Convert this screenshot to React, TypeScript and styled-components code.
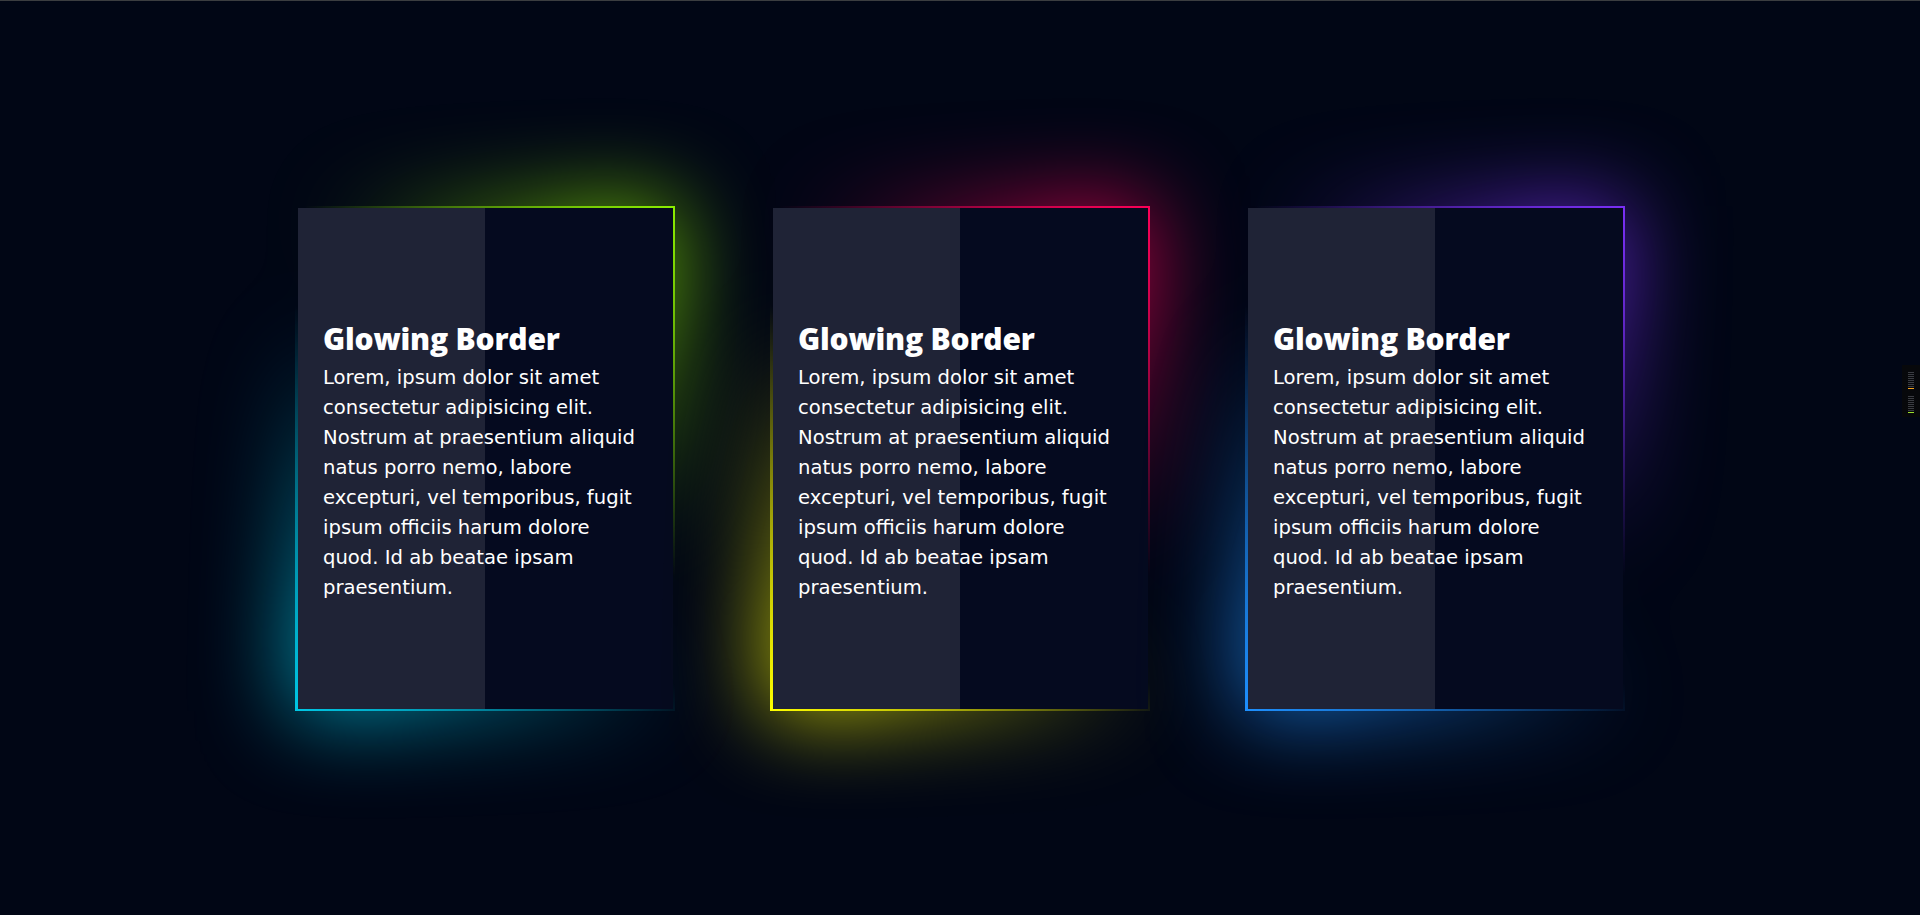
import React from "react";
import styled, { createGlobalStyle } from "styled-components";

const Global = createGlobalStyle`
  html, body {
    margin: 0;
    padding: 0;
    background: #010615;
  }
  body {
    border-top: 1px solid #3b3d40;
    font-family: "DejaVu Sans", "Open Sans", sans-serif;
    color: #ffffff;
  }
`;

const Page = styled.main`
  min-height: 914px;
  display: flex;
  align-items: center;
  justify-content: center;
  gap: 95px;
`;

const Card = styled.article<{ $from: string; $to: string }>`
  position: relative;
  isolation: isolate;
  width: 380px;
  height: 505px;
  box-sizing: border-box;
  padding: 2px 2px 2px 3px;
  display: flex;

  &::before,
  &::after {
    content: "";
    position: absolute;
    inset: 0;
    background: linear-gradient(
      45deg,
      ${(p) => p.$from} 0%,
      transparent 46%,
      transparent 58%,
      ${(p) => p.$to} 100%
    );
  }
  &::after {
    z-index: 0;
    filter: blur(46px);
  }
  &::before {
    z-index: 1;
  }
`;

const Panel = styled.div`
  position: relative;
  z-index: 2;
  flex: 1;
  display: flex;
  flex-direction: column;
  justify-content: center;
  padding: 7px 24px 0 25px;
  background: linear-gradient(90deg, #1f2336 50%, #050a1f 50%);
`;

const Title = styled.h2`
  margin: 0 0 6px;
  font-family: "Open Sans", "Noto Sans", sans-serif;
  font-weight: 800;
  font-size: 30px;
  line-height: 36px;
  letter-spacing: -0.2px;
  color: #ffffff;
`;

const Body = styled.p`
  margin: 0;
  font-family: "DejaVu Sans", "Open Sans", sans-serif;
  font-weight: 400;
  font-size: 19.6px;
  line-height: 30px;
  color: #ffffff;
`;

const MiniMap = styled.aside`
  position: fixed;
  right: 0;
  top: 365px;
  width: 18px;
  height: 52px;
  box-sizing: border-box;
  padding: 7px 6px 0 6px;
  background: #07080b;
  display: flex;
  flex-direction: column;
  gap: 1px;
`;

const MapLine = styled.span<{ $color: string; $gap?: boolean }>`
  display: block;
  height: 1px;
  background: ${(p) => p.$color};
  margin-top: ${(p) => (p.$gap ? "6px" : "0")};
`;

const cards = [
  { from: "#00c8e6", to: "#8cf000" },
  { from: "#ffff00", to: "#ff0058" },
  { from: "#1e90ff", to: "#7b2ff7" },
];

const text =
  "Lorem, ipsum dolor sit amet consectetur adipisicing elit. Nostrum at praesentium aliquid natus porro nemo, labore excepturi, vel temporibus, fugit ipsum officiis harum dolore quod. Id ab beatae ipsam praesentium.";

export default function App() {
  const group = (accent: string, first: boolean) => (
    <>
      {Array.from({ length: 8 }).map((_, i) => (
        <MapLine key={i} $color="#3a3c42" $gap={!first && i === 0} />
      ))}
      <MapLine $color={accent} />
    </>
  );
  return (
    <>
      <Global />
      <Page>
        {cards.map((c, i) => (
          <Card key={i} $from={c.from} $to={c.to}>
            <Panel>
              <Title>Glowing Border</Title>
              <Body>{text}</Body>
            </Panel>
          </Card>
        ))}
      </Page>
      <MiniMap>
        {group("#f0a020", true)}
        {group("#9be02a", false)}
      </MiniMap>
    </>
  );
}
